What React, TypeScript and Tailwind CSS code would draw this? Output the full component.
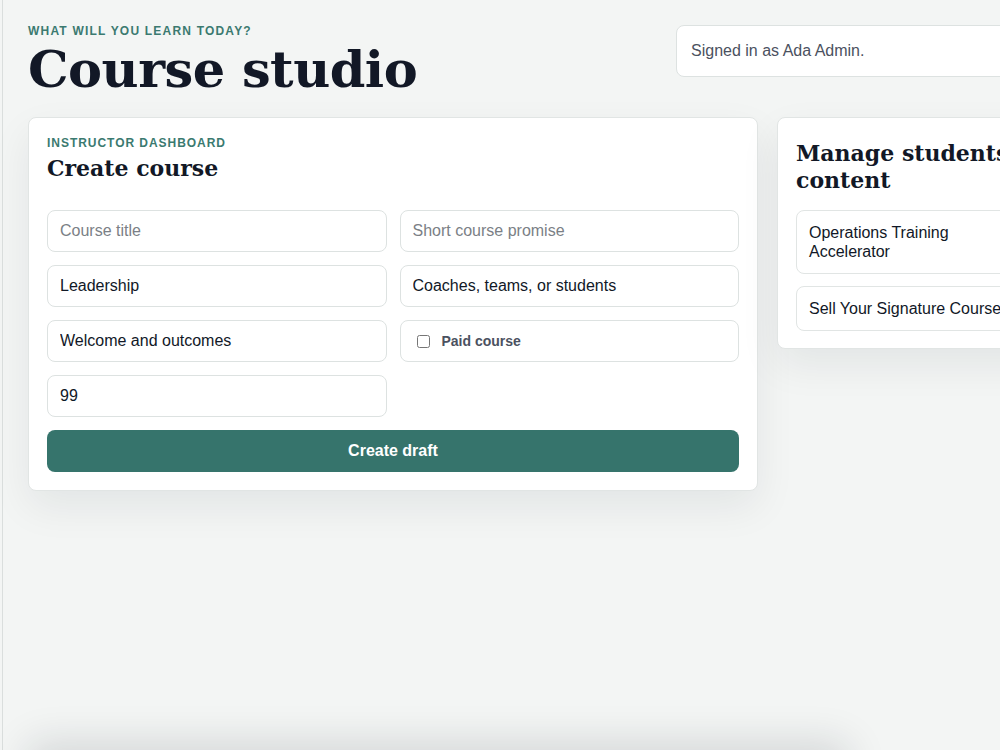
import React from 'react';

const serif = "font-['DejaVu_Serif','Liberation_Serif',serif]";
const inputBase =
  "h-[42px] w-full rounded-lg border border-[#dde2e1] bg-white px-[12px] text-[16px] text-[#111827] placeholder:text-[#7b7f86] outline-none";

const FieldInput = ({ placeholder, value }: { placeholder?: string; value?: string }) => (
  <input className={inputBase} placeholder={placeholder} defaultValue={value} />
);

export default function App(): JSX.Element {
  return (
    <div className="h-[750px] w-[1000px] overflow-hidden bg-[#f3f5f4] font-['Liberation_Sans',Arial,sans-serif]">
      <div className="ml-[2px] h-full w-[1200px] border-l border-[#dadedd] pl-[25px] pt-[24px]">
        <header className="flex w-[1088px] items-start justify-between">
          <div className="flex flex-col">
            <p className="text-[12px] font-bold uppercase leading-[14px] tracking-[0.1em] text-[#3b7a70]">
              What will you learn today?
            </p>
            <h1 className={`${serif} mt-[3px] text-[51px] font-bold leading-[57px] tracking-[-0.01em] text-[#121826]`}>
              Course studio
            </h1>
          </div>
          <div className="mt-[1px] w-[440px] rounded-lg border border-[#dde2e1] bg-white px-[14px] py-[16px] text-[16px] leading-[18px] text-[#4b5160]">
            Signed in as Ada Admin.
          </div>
        </header>

        <main className="mt-[19px] flex items-start gap-[19px]">
          <section className="w-[730px] rounded-lg border border-[#e1e5e4] bg-white p-[18px] shadow-[0_16px_40px_rgba(20,30,40,0.07)]">
            <p className="text-[12px] font-bold uppercase leading-[14px] tracking-[0.08em] text-[#3b7a70]">
              Instructor dashboard
            </p>
            <h2 className={`${serif} mt-[3px] text-[22px] font-bold leading-[30px] text-[#121826]`}>Create course</h2>

            <form className="mt-[27px] grid grid-cols-2 gap-x-[13px] gap-y-[13px]" onSubmit={(e) => e.preventDefault()}>
              <FieldInput placeholder="Course title" />
              <FieldInput placeholder="Short course promise" />
              <FieldInput value="Leadership" />
              <FieldInput value="Coaches, teams, or students" />
              <FieldInput value="Welcome and outcomes" />
              <label className="flex h-[42px] items-center gap-[12px] rounded-lg border border-[#dde2e1] bg-white px-[16px] text-[14px] font-bold text-[#4b5160]">
                <input type="checkbox" className="ml-0 h-[13px] w-[13px]" />
                Paid course
              </label>
              <FieldInput value="99" />
              <div />
              <button
                type="submit"
                className="col-span-2 h-[42px] rounded-lg bg-[#36746c] text-[16px] font-bold text-white"
              >
                Create draft
              </button>
            </form>
          </section>

          <section className="w-[272px] shrink-0 rounded-lg border border-[#e1e5e4] bg-white p-[18px] pb-[17px] shadow-[0_16px_40px_rgba(20,30,40,0.07)]">
            <h2 className={`${serif} mt-[4px] whitespace-nowrap text-[22px] font-bold leading-[27px] text-[#121826]`}>
              Manage students &amp;
              <br />
              content
            </h2>
            <ul className="mt-[16px] flex flex-col gap-[12px]">
              <li className="rounded-lg border border-[#e1e5e4] px-[12px] py-[12px] text-[16px] leading-[19px] text-[#111827]">
                Operations Training Accelerator
              </li>
              <li className="whitespace-nowrap rounded-lg border border-[#e1e5e4] px-[12px] py-[12px] text-[16px] leading-[19px] text-[#111827]">
                Sell Your Signature Course
              </li>
            </ul>
          </section>
        </main>

        <div className="mt-[262px] h-[200px] w-[820px] rounded-lg bg-white shadow-[0_-10px_40px_rgba(20,30,40,0.14)]" />
      </div>
    </div>
  );
}
